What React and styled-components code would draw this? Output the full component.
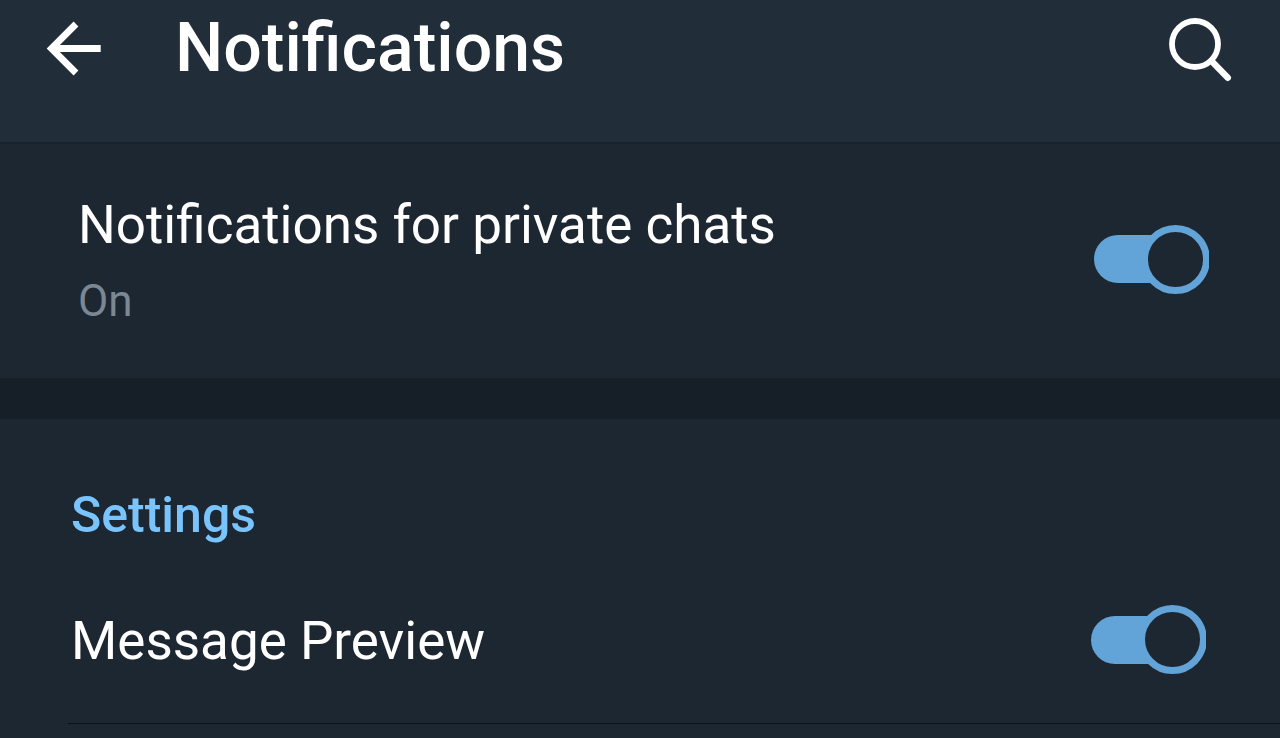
import React, { useState } from 'react';
import styled, { createGlobalStyle } from 'styled-components';

const GlobalStyle = createGlobalStyle`
  *,
  *::before,
  *::after {
    box-sizing: border-box;
  }

  body {
    margin: 0;
    min-height: 100vh;
    background: #1d2732;
    color: #fff;
    font-family: Roboto, 'Liberation Sans', sans-serif;
  }
`;

const Toggle = ({ id }) => {
  const [on, setOn] = useState(true);

  return (
    <Switch
      id={id}
      type="checkbox"
      role="switch"
      checked={on}
      onChange={e => setOn(e.target.checked)}
    />
  );
};

export default () => (
  <main>
    <GlobalStyle />
    <Header>
      <IconButton aria-label="Back">
        <svg width="56" height="56" viewBox="0 0 56 56" fill="none" stroke="#fff" strokeWidth="6.8">
          <path d="M54.700 28.500H6M30 4L5.500 28.500L30 53" />
        </svg>
      </IconButton>
      <Title>Notifications</Title>
      <IconButton aria-label="Search">
        <svg width="64" height="64" viewBox="0 0 64 64" fill="none" stroke="#fff">
          <circle cx="27" cy="28" r="23" strokeWidth="5.8" />
          <path d="M43.500 45L59.800 61.800" strokeWidth="6.4" strokeLinecap="round" />
        </svg>
      </IconButton>
    </Header>
    <Section>
      <Row $left={78} $right={71}>
        <RowText>
          <Label htmlFor="private-chats">Notifications for private chats</Label>
          <Status>On</Status>
        </RowText>
        <Toggle id="private-chats" />
      </Row>
    </Section>
    <Divider />
    <Section>
      <SectionTitle>Settings</SectionTitle>
      <PreviewRow $left={71} $right={74}>
        <Label htmlFor="message-preview">Message Preview</Label>
        <Toggle id="message-preview" />
      </PreviewRow>
      <Line />
    </Section>
  </main>
);

const Header = styled.header`
  display: flex;
  align-items: center;
  padding: 0 48px 46px 46px;
  background: #212d39;
  border-bottom: 2px solid #19222b;
`;

const IconButton = styled.button`
  display: flex;
  padding: 0;
  border: 0;
  background: none;
  cursor: pointer;

  svg {
    overflow: visible;
  }
`;

const Title = styled.h1`
  flex: 1;
  margin: 0 0 0 73px;
  font-size: 68px;
  font-weight: 500;
  line-height: 96px;
`;

const Section = styled.section`
  background: #1d2732;
`;

const Row = styled.div`
  display: flex;
  align-items: center;
  justify-content: space-between;
  padding: 45px ${props => props.$right}px 49px ${props => props.$left}px;
`;

const PreviewRow = styled(Row)`
  align-items: flex-start;
  padding-top: 58px;
  padding-bottom: 46px;
`;

const RowText = styled.div`
  display: flex;
  flex-direction: column;
  gap: 12px;
`;

const Label = styled.label`
  font-size: 53px;
  line-height: 72px;
`;

const Status = styled.span`
  color: #7b8894;
  font-size: 44px;
  line-height: 56px;
`;

const Switch = styled.input`
  display: grid;
  align-items: center;
  flex: none;
  width: 115px;
  height: 69px;
  margin: 0;
  appearance: none;
  overflow: hidden;
  cursor: pointer;

  &::before,
  &::after {
    content: '';
    grid-area: 1 / 1;
  }

  &::before {
    width: 96px;
    height: 48px;
    border-radius: 24px;
    background: #62a3d8;
  }

  &::after {
    width: 69px;
    height: 69px;
    border: 7px solid #62a3d8;
    border-radius: 50%;
    background: #1d2732;
  }

  &:checked::after {
    margin-left: 47px;
  }

  &:not(:checked)::before {
    background: #7b8894;
  }

  &:not(:checked)::after {
    border-color: #7b8894;
  }
`;

const Divider = styled.div`
  height: 41px;
  background: #161e27;
`;

const SectionTitle = styled.h2`
  margin: 0;
  padding: 64px 71px 0;
  color: #79c4fc;
  font-size: 50px;
  font-weight: 500;
  line-height: 64px;
`;

const Line = styled.hr`
  margin: 0 0 0 68px;
  border: 0;
  border-top: 1px solid #0c1219;
`;
